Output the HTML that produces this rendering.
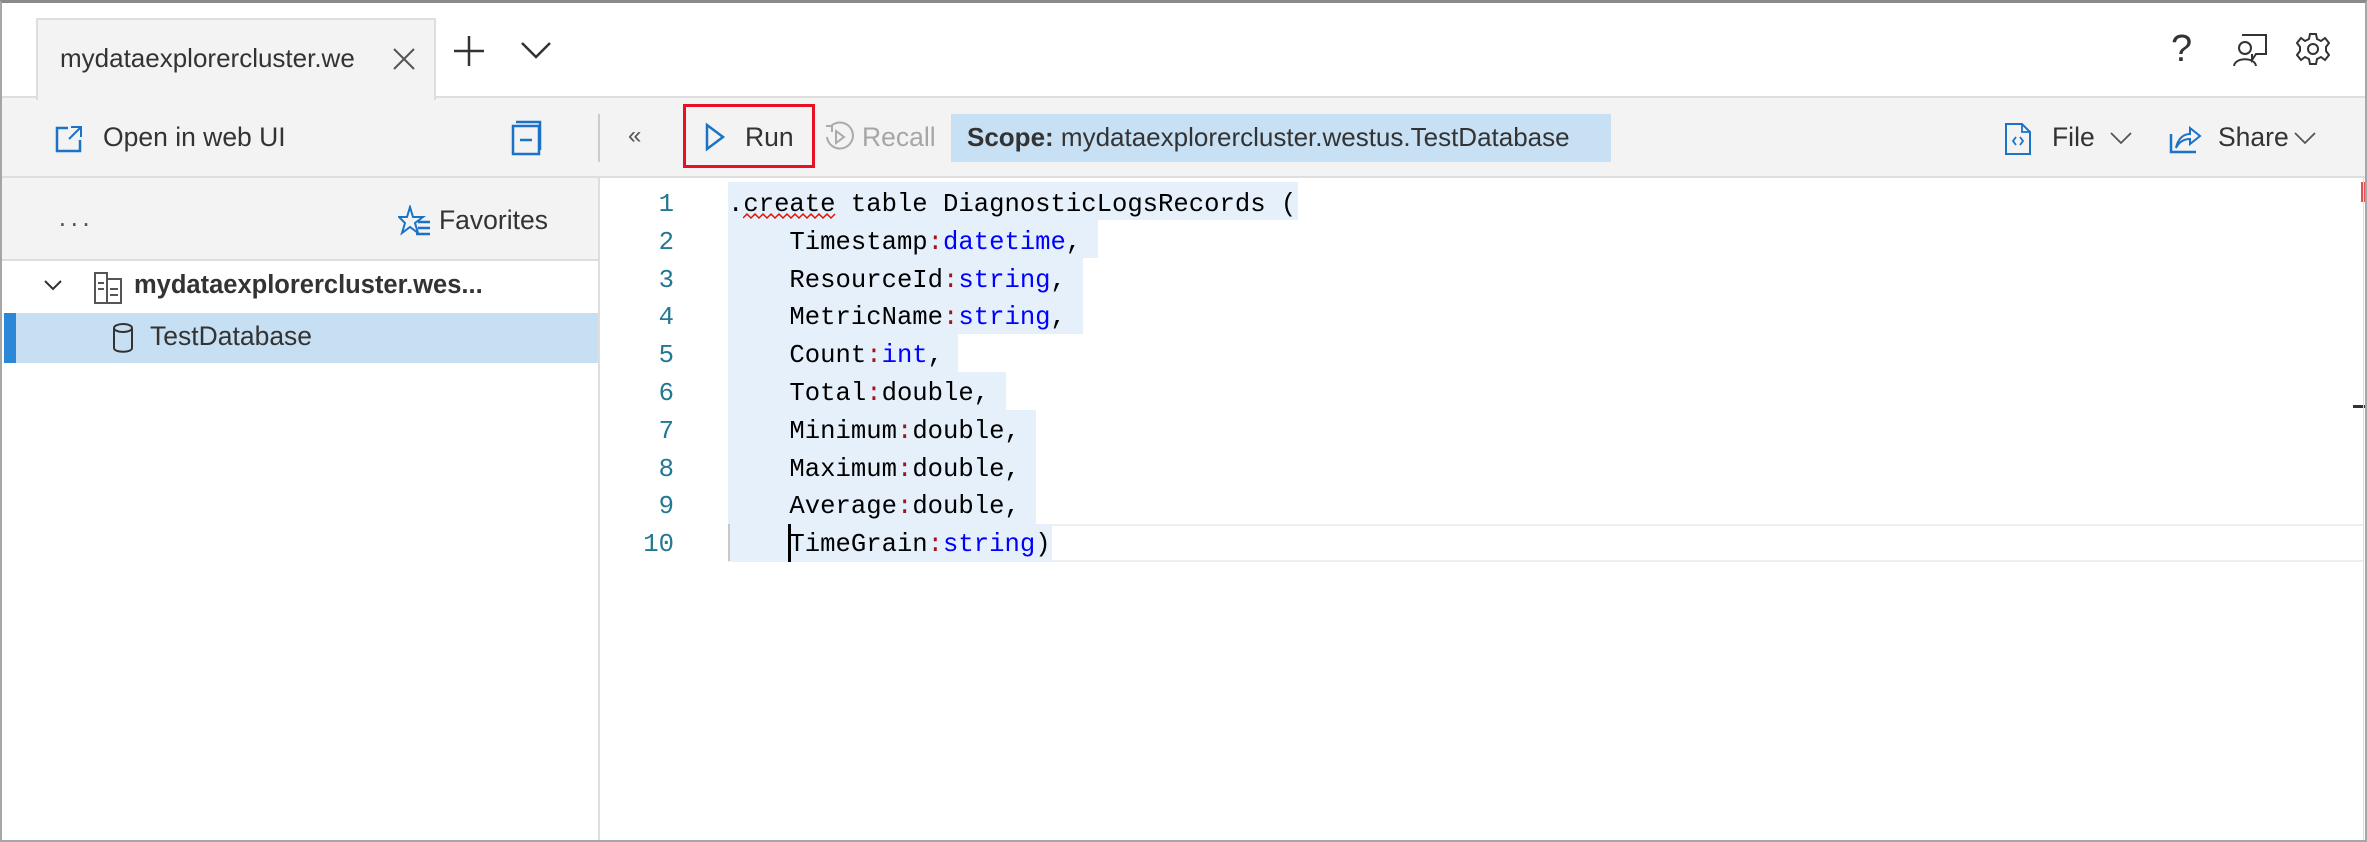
<!DOCTYPE html>
<html><head><meta charset="utf-8"><style>
*{box-sizing:border-box;margin:0;padding:0}
body{width:2367px;height:842px;overflow:hidden;background:#fff;font-family:"Liberation Sans",sans-serif;color:#333;position:relative}
.abs{position:absolute}
.frame{left:0;top:0;width:2367px;height:842px;border:2px solid #a6a6a6;border-top:3px solid #8a8a8a}
.txt{font-size:26.5px;white-space:nowrap}
.code{font-family:"Liberation Mono",monospace;font-size:25.6px;white-space:pre;color:#000}
.ln{font-family:"Liberation Mono",monospace;font-size:25.6px;color:#237893;text-align:right;width:60px}
.sel{background:#e5f0fb;height:38px}
.b{color:#0000ff}.r{color:#a31515}
</style></head><body>
<div class="abs" style="left:0;top:96px;width:2367px;height:82px;background:#f3f3f3;border-top:2px solid #dedede;border-bottom:2px solid #dedede"></div>
<div class="abs" style="left:36px;top:18px;width:400px;height:82px;background:#f3f3f3;border:2px solid #dedede;border-bottom:none"></div>
<div class="abs txt" style="left:60px;top:43px;font-size:26px;color:#333;width:316px;overflow:hidden">mydataexplorercluster.we</div>
<svg class="abs" style="left:392px;top:47px" width="24" height="24"><path d="M2 2L22 22M22 2L2 22" stroke="#555" stroke-width="2"/></svg>
<svg class="abs" style="left:452px;top:34px" width="34" height="34"><path d="M17 2V32M2 17H32" stroke="#333" stroke-width="2.5"/></svg>
<svg class="abs" style="left:520px;top:40px" width="32" height="20"><path d="M2 3L16 17L30 3" stroke="#333" stroke-width="2.5" fill="none"/></svg>
<div class="abs" style="left:2171px;top:28px;font-size:38px;color:#333">?</div>
<svg class="abs" style="left:2230px;top:32px" width="40" height="36"><circle cx="15" cy="16" r="6" fill="none" stroke="#333" stroke-width="2"/><path d="M4 34C5 25 25 25 26 34M12 3H36V22H26L22 28V22" fill="none" stroke="#333" stroke-width="2"/></svg>
<svg class="abs" style="left:2296px;top:32px" width="34" height="34" viewBox="0 0 34 34"><circle cx="17" cy="17" r="5" fill="none" stroke="#333" stroke-width="2"/><path d="M14 2H20L21 7L25 9L29 6L33 11L30 15V19L33 23L29 28L25 25L21 27L20 32H14L13 27L9 25L5 28L1 23L4 19V15L1 11L5 6L9 9L13 7Z" fill="none" stroke="#333" stroke-width="2"/></svg>
<svg class="abs" style="left:54px;top:124px" width="30" height="30"><path d="M14 4H3V27H26V16" fill="none" stroke="#1a73c7" stroke-width="2.5"/><path d="M17 3H27V13M27 3L15 15" fill="none" stroke="#1a73c7" stroke-width="2"/></svg>
<div class="abs txt" style="left:103px;top:122px;color:#333">Open in web UI</div>
<svg class="abs" style="left:510px;top:120px" width="32" height="36"><rect x="3" y="6" width="26" height="28" fill="none" stroke="#1a73c7" stroke-width="2.5"/><path d="M6 2H30V30M10 20H22" stroke="#1a73c7" stroke-width="2.5" fill="none"/></svg>
<div class="abs" style="left:598px;top:114px;width:2px;height:48px;background:#ccc"></div>
<div class="abs txt" style="left:628px;top:122px;font-size:24px;color:#555">«</div>
<div class="abs" style="left:683px;top:104px;width:132px;height:64px;border:3px solid #e81123"></div>
<svg class="abs" style="left:704px;top:122px" width="22" height="30"><path d="M3 3L19 15L3 27Z" fill="none" stroke="#1a73c7" stroke-width="2.5"/></svg>
<div class="abs txt" style="left:745px;top:122px;color:#333">Run</div>
<svg class="abs" style="left:822px;top:120px" width="34" height="34"><path d="M9 6A13 13 0 1 1 5 17" fill="none" stroke="#aaa" stroke-width="2"/><path d="M4 6H10V12" fill="none" stroke="#aaa" stroke-width="2"/><path d="M14 11L22 17L14 23Z" fill="none" stroke="#aaa" stroke-width="2"/></svg>
<div class="abs txt" style="left:862px;top:122px;color:#a6a6a6">Recall</div>
<div class="abs" style="left:951px;top:114px;width:660px;height:48px;background:#c7e0f4"></div>
<div class="abs txt" style="left:967px;top:122px;color:#333;font-size:26px"><b>Scope:</b> mydataexplorercluster.westus.TestDatabase</div>
<svg class="abs" style="left:2004px;top:122px" width="28" height="34"><path d="M2 2H18L26 10V32H2Z" fill="none" stroke="#1a73c7" stroke-width="2"/><path d="M18 2V10H26M12 15L9 19L12 23M16 15L19 19L16 23" fill="none" stroke="#1a73c7" stroke-width="1.8"/></svg>
<div class="abs txt" style="left:2052px;top:122px">File</div>
<svg class="abs" style="left:2110px;top:131px" width="22" height="14"><path d="M1 2L11 12L21 2" fill="none" stroke="#555" stroke-width="1.8"/></svg>
<svg class="abs" style="left:2168px;top:122px" width="34" height="32"><path d="M3 12V30H28" fill="none" stroke="#1a73c7" stroke-width="2.5"/><path d="M8 26C10 16 16 12 22 12V6L32 14L22 22V17C16 17 11 20 8 26Z" fill="none" stroke="#1a73c7" stroke-width="2"/></svg>
<div class="abs txt" style="left:2218px;top:122px">Share</div>
<svg class="abs" style="left:2294px;top:131px" width="22" height="14"><path d="M1 2L11 12L21 2" fill="none" stroke="#555" stroke-width="1.8"/></svg>
<div class="abs" style="left:0;top:178px;width:600px;height:83px;background:#f3f3f3;border-bottom:2px solid #dedede"></div>
<div class="abs" style="left:598px;top:178px;width:2px;height:664px;background:#dedede"></div>
<div class="abs txt" style="left:58px;top:208px;color:#555;letter-spacing:3px">···</div>
<svg class="abs" style="left:398px;top:205px" width="34" height="34"><path d="M12 2L15 12H25L17 18L20 28L12 22L4 28L7 18L1 12H9Z" fill="none" stroke="#1a73c7" stroke-width="2"/><path d="M20 17H32M20 23H32M18 29H32" stroke="#1a73c7" stroke-width="2.5"/></svg>
<div class="abs txt" style="left:439px;top:205px;color:#333">Favorites</div>
<svg class="abs" style="left:44px;top:280px" width="18" height="12"><path d="M1 1L9 9L17 1" fill="none" stroke="#333" stroke-width="2"/></svg>
<svg class="abs" style="left:93px;top:271px" width="32" height="34"><rect x="2" y="2" width="12" height="30" fill="none" stroke="#555" stroke-width="2"/><rect x="14" y="8" width="14" height="24" fill="none" stroke="#555" stroke-width="2"/><path d="M5 12H11M5 18H11M17 18H25M17 24H25" stroke="#555" stroke-width="2"/></svg>
<div class="abs txt" style="left:134px;top:271px;font-size:25.5px;font-weight:bold;color:#333">mydataexplorercluster.wes...</div>
<div class="abs" style="left:4px;top:313px;width:594px;height:50px;background:#c7dff3"></div>
<div class="abs" style="left:4px;top:313px;width:12px;height:50px;background:#2b88d8"></div>
<svg class="abs" style="left:112px;top:322px" width="22" height="32"><ellipse cx="11" cy="6" rx="9" ry="4" fill="none" stroke="#333" stroke-width="2"/><path d="M2 6V26C2 31 20 31 20 26V6" fill="none" stroke="#333" stroke-width="2"/></svg>
<div class="abs txt" style="left:150px;top:321px;color:#333">TestDatabase</div>
<div class="abs" style="left:728px;top:524px;width:1636px;height:38px;border-top:2px solid #eee;border-bottom:2px solid #eee"></div>
<div class="abs" style="left:728px;top:183px;width:2px;height:378px;background:#c8c8c8"></div>
<div class="abs sel" style="left:728px;top:182px;width:570px"></div>
<div class="abs sel" style="left:728px;top:220px;width:370px"></div>
<div class="abs sel" style="left:728px;top:258px;width:355px"></div>
<div class="abs sel" style="left:728px;top:296px;width:355px"></div>
<div class="abs sel" style="left:728px;top:334px;width:230px"></div>
<div class="abs sel" style="left:728px;top:372px;width:278px"></div>
<div class="abs sel" style="left:728px;top:410px;width:308px"></div>
<div class="abs sel" style="left:728px;top:448px;width:308px"></div>
<div class="abs sel" style="left:728px;top:486px;width:308px"></div>
<div class="abs sel" style="left:730px;top:524px;width:322px"></div>
<div class="abs" style="left:788px;top:524px;width:3px;height:38px;background:#000"></div>
<div class="abs ln" style="left:614px;top:186px;line-height:37.8px">1<br>2<br>3<br>4<br>5<br>6<br>7<br>8<br>9<br>10</div>
<div class="abs code" style="left:728px;top:186px;line-height:37.8px">.create table DiagnosticLogsRecords (
    Timestamp<span class="r">:</span><span class="b">datetime</span>,
    ResourceId<span class="r">:</span><span class="b">string</span>,
    MetricName<span class="r">:</span><span class="b">string</span>,
    Count<span class="r">:</span><span class="b">int</span>,
    Total<span class="r">:</span>double,
    Minimum<span class="r">:</span>double,
    Maximum<span class="r">:</span>double,
    Average<span class="r">:</span>double,
    TimeGrain<span class="r">:</span><span class="b">string</span>)</div>
<svg class="abs" style="left:743px;top:212px" width="96" height="8"><path d="M0 6L4 2L8 6L12 2L16 6L20 2L24 6L28 2L32 6L36 2L40 6L44 2L48 6L52 2L56 6L60 2L64 6L68 2L72 6L76 2L80 6L84 2L88 6L92 2" fill="none" stroke="#e51400" stroke-width="1.5"/></svg>
<div class="abs" style="left:2361px;top:182px;width:4px;height:20px;background:#e05050"></div>
<div class="abs" style="left:2353px;top:405px;width:12px;height:3px;background:#333"></div>
<div class="abs" style="left:2363px;top:178px;width:1px;height:664px;background:#ddd"></div>
<div class="abs frame"></div>
</body></html>
